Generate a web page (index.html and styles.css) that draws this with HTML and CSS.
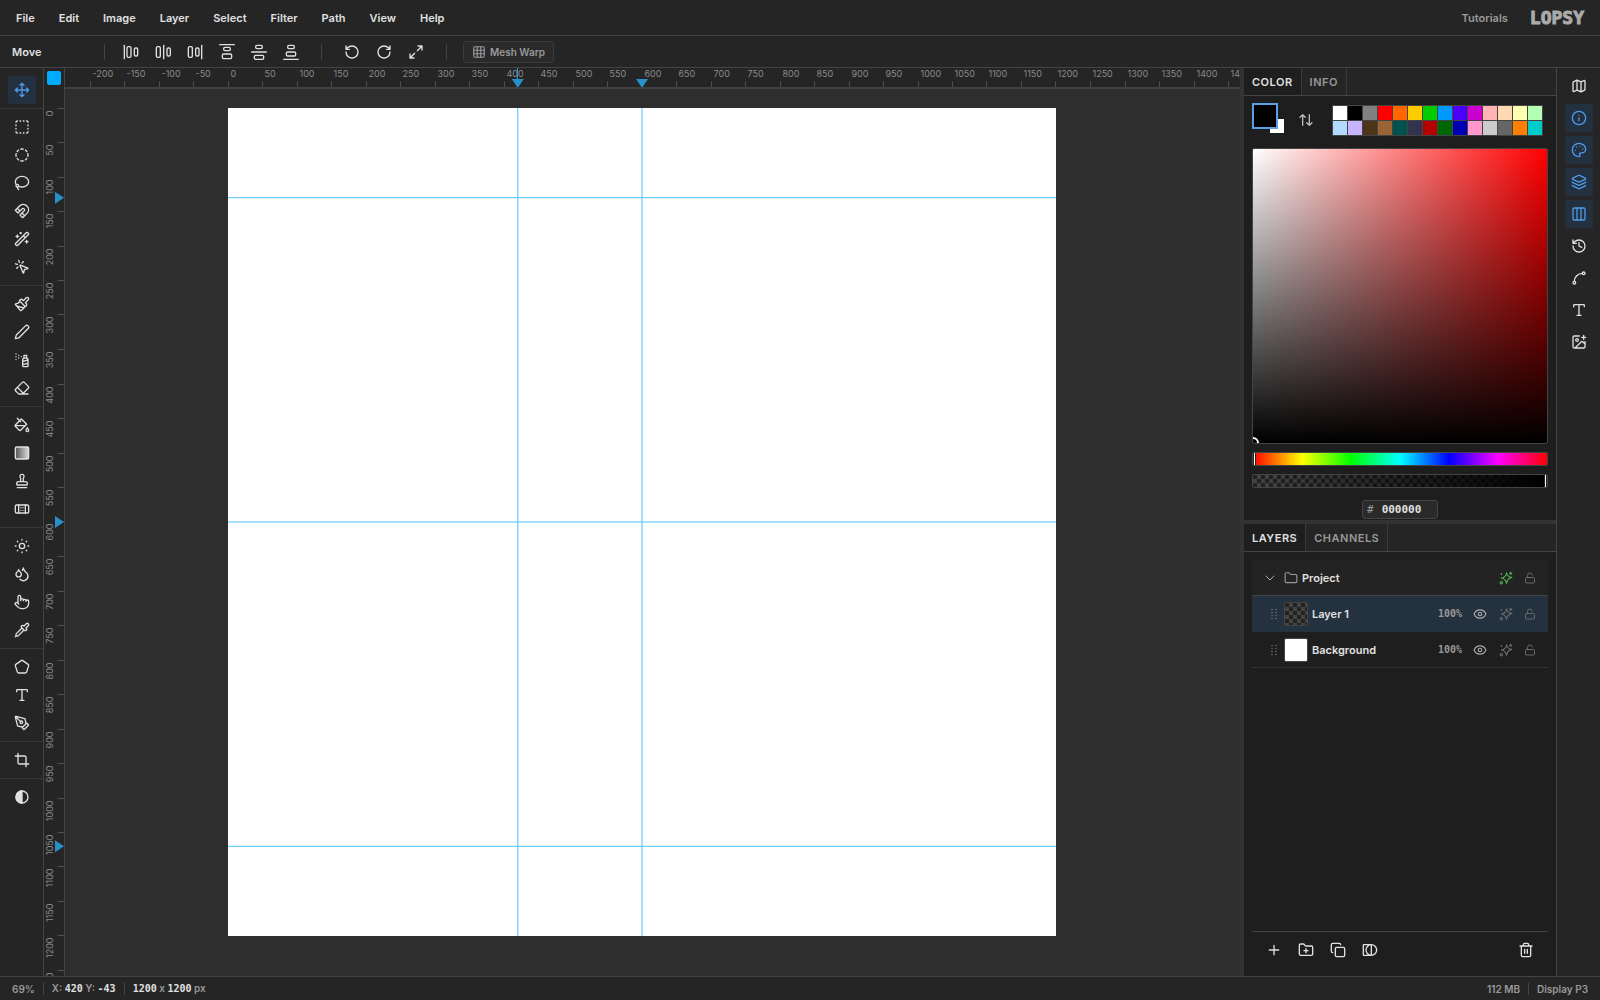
FILE: index.html
```html
<!DOCTYPE html>
<html lang="en">

<head>
  <meta charset="UTF-8">
  <meta name="viewport" content="width=device-width, initial-scale=1.0">
  <title>Lopsy</title>
  <link rel="stylesheet" href="styles.css">
</head>

<body>
  <!-- icon sprite -->
  <svg class="sprite" aria-hidden="true">
    <defs>
      <linearGradient id="grad-fill"><stop offset="0" stop-color="#555"/><stop offset="1" stop-color="#ddd"/></linearGradient>
    </defs>
    <symbol id="i-move" viewBox="0 0 24 24"><path d="M12 2v20M15 19l-3 3-3-3M19 9l3 3-3 3M2 12h20M5 9l-3 3 3 3M9 5l3-3 3 3"/></symbol>
    <symbol id="i-marquee" viewBox="0 0 24 24"><path d="M5 3a2 2 0 0 0-2 2M19 3a2 2 0 0 1 2 2M21 19a2 2 0 0 1-2 2M5 21a2 2 0 0 1-2-2M9 3h1M9 21h1M14 3h1M14 21h1M3 9v1M21 9v1M3 14v1M21 14v1"/></symbol>
    <symbol id="i-ellipse" viewBox="0 0 24 24"><path d="M10.1 3.18a9 9 0 0 1 3.8 0M13.9 20.82a9 9 0 0 1-3.8 0M17.2 4.7a9 9 0 0 1 2.1 2.1M3.18 13.9a9 9 0 0 1 0-3.8M19.3 17.2a9 9 0 0 1-2.1 2.1M20.82 10.1a9 9 0 0 1 0 3.8M4.7 6.8a9 9 0 0 1 2.1-2.1M6.8 19.3a9 9 0 0 1-2.1-2.1"/></symbol>
    <symbol id="i-lasso" viewBox="0 0 24 24"><path d="M7 22a5 5 0 0 1-2-4M3.3 14A6.8 6.8 0 0 1 2 10c0-4.4 4.5-8 10-8s10 3.6 10 8-4.5 8-10 8a12 12 0 0 1-5-1"/><circle cx="5" cy="16" r="2"/></symbol>
    <symbol id="i-magnet" viewBox="0 0 24 24"><path d="m6 15-4-4 6.75-6.77a7.79 7.79 0 0 1 11 11L13 22l-4-4 6.39-6.36a2.14 2.14 0 0 0-3-3L6 15M5 8l4 4M12 15l4 4"/></symbol>
    <symbol id="i-wand" viewBox="0 0 24 24"><path d="m21.64 3.64-1.28-1.28a1.21 1.21 0 0 0-1.72 0L2.36 18.64a1.21 1.21 0 0 0 0 1.72l1.28 1.28a1.2 1.2 0 0 0 1.72 0L21.64 5.36a1.2 1.2 0 0 0 0-1.72M14 7l3 3M5 6v4M19 14v4M10 2v2M7 8H3M21 16h-4M11 3H9"/></symbol>
    <symbol id="i-click" viewBox="0 0 24 24"><path d="M14 4.1 12 6M5.1 8l-2.9-.8M6 12l-1.9 2M7.2 2.2 8 5.1M9.04 9.69a.5.5 0 0 1 .65-.65l11 4.5a.5.5 0 0 1-.07.95l-4.35 1.04a1 1 0 0 0-.74.74l-1.04 4.35a.5.5 0 0 1-.95.07z"/></symbol>
    <symbol id="i-brush" viewBox="0 0 24 24"><path d="m14.62 17.9-10.68-2.92M18.38 2.62a1 1 0 1 1 3 3L17.36 9.64a.5.5 0 0 0 0 .71l.94.94a2.41 2.41 0 0 1 0 3.41l-.94.94a.5.5 0 0 1-.71 0L8.35 7.35a.5.5 0 0 1 0-.71l.95-.94a2.41 2.41 0 0 1 3.4 0l.95.94a.5.5 0 0 0 .7 0zM9 8c-1.8 2.71-3.97 3.46-6.58 3.95a.51.51 0 0 0-.3.82l7.32 8.88a1 1 0 0 0 1.18.2C12.74 20.4 16 16.8 16 15"/></symbol>
    <symbol id="i-pencil" viewBox="0 0 24 24"><path d="M21.17 6.81a1 1 0 0 0-3.98-3.98L3.84 16.17a2 2 0 0 0-.5.83l-1.32 4.36a.5.5 0 0 0 .62.62l4.36-1.32a2 2 0 0 0 .83-.5z"/></symbol>
    <symbol id="i-spray" viewBox="0 0 24 24"><path d="M3 3h.01M7 5h.01M11 7h.01M3 7h.01M7 9h.01M3 11h.01M15 5h4v4h-4zM19 9l2 2v10c0 .6-.4 1-1 1h-6c-.6 0-1-.4-1-1V11l2-2M13 14l8-2M13 19l8-2"/></symbol>
    <symbol id="i-eraser" viewBox="0 0 24 24"><path d="M21 21H8a2 2 0 0 1-1.42-.59l-4-4a2 2 0 0 1 0-2.82l10-10a2 2 0 0 1 2.83 0l6 6a2 2 0 0 1 0 2.82L12.83 21M5.08 11.09l8.83 8.83"/></symbol>
    <symbol id="i-bucket" viewBox="0 0 24 24"><path d="m19 11-8-8-8.6 8.6a2 2 0 0 0 0 2.8l5.2 5.2c.8.8 2 .8 2.8 0L19 11ZM5 2l5 5M2 13h15M22 20a2 2 0 1 1-4 0c0-1.6 1.7-2.4 2-4 .3 1.6 2 2.4 2 4Z"/></symbol>
    <symbol id="i-gradient" viewBox="0 0 24 24"><rect x="2" y="3" width="20" height="18" rx="2" fill="url(#grad-fill)"/></symbol>
    <symbol id="i-stamp" viewBox="0 0 24 24"><path d="M5 22h14M19.27 13.73A2.5 2.5 0 0 0 17.5 13h-11A2.5 2.5 0 0 0 4 15.5V17a1 1 0 0 0 1 1h14a1 1 0 0 0 1-1v-1.5c0-.66-.26-1.3-.73-1.77ZM14 13V8.5C14 7 15 7 15 5a3 3 0 0 0-3-3c-1.66 0-3 1-3 3s1 2 1 3.5V13"/></symbol>
    <symbol id="i-heal" viewBox="0 0 24 24"><rect x="2" y="6" width="20" height="12" rx="2"/><path d="M7 6v12M17 6v12M10.5 10h.01M13.5 10h.01M10.5 14h.01M13.5 14h.01"/></symbol>
    <symbol id="i-sun" viewBox="0 0 24 24"><circle cx="12" cy="12" r="4"/><path d="M12 2v1M12 21v1M4.93 4.93l.7.7M18.37 18.37l.7.7M2 12h1M21 12h1M5.63 18.37l-.7.7M19.07 4.93l-.7.7"/></symbol>
    <symbol id="i-drops" viewBox="0 0 24 24"><path d="M7 16.3c2.2 0 4-1.83 4-4.05 0-1.16-.57-2.26-1.71-3.19S7.29 6.75 7 5.3c-.29 1.45-1.14 2.84-2.29 3.76S3 11.1 3 12.25c0 2.22 1.8 4.05 4 4.05zM12.56 6.6A10.97 10.97 0 0 0 14 3.02c.5 2.5 2 4.9 4 6.5s3 3.5 3 5.5a6.98 6.98 0 0 1-11.91 4.97"/></symbol>
    <symbol id="i-finger" viewBox="0 0 24 24"><path d="M18 11v-1a2 2 0 0 0-4 0M14 10V9a2 2 0 0 0-4 0v1M10 9.5V4a2 2 0 0 0-4 0v10M18 11a2 2 0 1 1 4 0v3a8 8 0 0 1-8 8h-2c-2.8 0-4.5-.86-6-2.34l-3.6-3.6a2 2 0 0 1 2.84-2.82L7 15"/></symbol>
    <symbol id="i-pipette" viewBox="0 0 24 24"><path d="m12 9-8.4 8.4a2 2 0 0 0-.6 1.43v1.34a2 2 0 0 1-.59 1.42A2 2 0 0 1 3.83 21h1.34a2 2 0 0 0 1.42-.59L15 12M18 9l.4.4a1 1 0 1 1-3 3l-3.8-3.8a1 1 0 1 1 3-3l.4.4 3.4-3.4a1 1 0 1 1 3 3zM2 22l.41-.41"/></symbol>
    <symbol id="i-pentagon" viewBox="0 0 24 24"><path d="M10.83 2.38a2 2 0 0 1 2.34 0l8 5.74a2 2 0 0 1 .73 2.25l-3.04 9.26a2 2 0 0 1-1.9 1.37H7.04a2 2 0 0 1-1.9-1.37L2.1 10.37a2 2 0 0 1 .73-2.25z"/></symbol>
    <symbol id="i-type" viewBox="0 0 24 24"><path d="M12 4v16M4 7V5a1 1 0 0 1 1-1h14a1 1 0 0 1 1 1v2M9 20h6"/></symbol>
    <symbol id="i-pen" viewBox="0 0 24 24"><path d="M15.7 21.3a1 1 0 0 1-1.4 0l-1.6-1.6a1 1 0 0 1 0-1.4l5.6-5.6a1 1 0 0 1 1.4 0l1.6 1.6a1 1 0 0 1 0 1.4zM18 13l-1.38-6.87a1 1 0 0 0-.74-.78L3.24 2.03a1 1 0 0 0-1.21 1.2l3.32 12.65a1 1 0 0 0 .78.75L13 18M2.3 2.3l7.29 7.29"/><circle cx="11" cy="11" r="2"/></symbol>
    <symbol id="i-crop" viewBox="0 0 24 24"><path d="M6 2v14a2 2 0 0 0 2 2h14M18 22V8a2 2 0 0 0-2-2H2"/></symbol>
    <symbol id="i-contrast" viewBox="0 0 24 24"><circle cx="12" cy="12" r="9"/><path d="M12 3a9 9 0 0 0 0 18z" fill="currentColor"/></symbol>
    <symbol id="i-align-left" viewBox="0 0 24 24"><path d="M2 2v20"/><rect x="6" y="4" width="6" height="16" rx="2"/><rect x="17" y="6" width="5" height="12" rx="2"/></symbol>
    <symbol id="i-align-center" viewBox="0 0 24 24"><path d="M13 2v20"/><rect x="2" y="4" width="6" height="16" rx="2"/><rect x="18" y="6" width="5" height="12" rx="2"/></symbol>
    <symbol id="i-align-right" viewBox="0 0 24 24"><path d="M22 2v20"/><rect x="2" y="4" width="6" height="16" rx="2"/><rect x="13" y="6" width="5" height="12" rx="2"/></symbol>
    <symbol id="i-align-top" viewBox="0 0 24 24"><path d="M1 1h22"/><rect x="7" y="5" width="10" height="5" rx="2"/><rect x="5" y="15" width="14" height="7" rx="2"/></symbol>
    <symbol id="i-align-middle" viewBox="0 0 24 24"><path d="M1 12h22"/><rect x="7" y="2" width="10" height="5" rx="2"/><rect x="5" y="17" width="14" height="6" rx="2"/></symbol>
    <symbol id="i-align-bottom" viewBox="0 0 24 24"><path d="M1 23h22"/><rect x="7" y="2" width="10" height="5" rx="2"/><rect x="5" y="12" width="14" height="6" rx="2"/></symbol>
    <symbol id="i-rotate-ccw" viewBox="0 0 24 24"><path d="M3 12a9 9 0 1 0 9-9 9.75 9.75 0 0 0-6.74 2.74L3 8M3 3v5h5"/></symbol>
    <symbol id="i-rotate-cw" viewBox="0 0 24 24"><path d="M21 12a9 9 0 1 1-9-9c2.52 0 4.93 1 6.74 2.74L21 8M21 3v5h-5"/></symbol>
    <symbol id="i-expand" viewBox="0 0 24 24"><path d="M15 3h6v6M21 3l-7 7M3 21l7-7M9 21H3v-6"/></symbol>
    <symbol id="i-grid" viewBox="0 0 24 24"><rect x="3" y="3" width="18" height="18" rx="2"/><path d="M3 9h18M3 15h18M9 3v18M15 3v18"/></symbol>
    <symbol id="i-map" viewBox="0 0 24 24"><path d="M14.1 5.55a2 2 0 0 0 1.8 0l3.65-1.83A1 1 0 0 1 21 4.62v12.76a1 1 0 0 1-.55.9l-4.56 2.27a2 2 0 0 1-1.78 0L9.9 18.45a2 2 0 0 0-1.8 0l-3.65 1.83A1 1 0 0 1 3 19.38V6.62a1 1 0 0 1 .55-.9L8.1 3.45a2 2 0 0 1 1.8 0zM15 5.76v15M9 3.24v15"/></symbol>
    <symbol id="i-info" viewBox="0 0 24 24"><circle cx="12" cy="12" r="10"/><path d="M12 16v-4M12 8h.01"/></symbol>
    <symbol id="i-palette" viewBox="0 0 24 24"><path d="M13.5 6.5h.01M17.5 10.5h.01M8.5 7.5h.01M6.5 12.5h.01M12 2C6.5 2 2 6.5 2 12s4.5 10 10 10c.93 0 1.65-.75 1.65-1.69 0-.44-.18-.83-.44-1.12-.29-.3-.44-.66-.44-1.13a1.64 1.64 0 0 1 1.67-1.67h2c3.05 0 5.55-2.5 5.55-5.55C21.97 6.01 17.46 2 12 2z"/></symbol>
    <symbol id="i-layers" viewBox="0 0 24 24"><path d="M12.83 2.18a2 2 0 0 0-1.66 0L2.6 6.08a1 1 0 0 0 0 1.83l8.58 3.91a2 2 0 0 0 1.66 0l8.58-3.9a1 1 0 0 0 0-1.83zM2 12a1 1 0 0 0 .58.91l8.6 3.91a2 2 0 0 0 1.65 0l8.58-3.9A1 1 0 0 0 22 12M2 17a1 1 0 0 0 .58.91l8.6 3.91a2 2 0 0 0 1.65 0l8.58-3.9A1 1 0 0 0 22 17"/></symbol>
    <symbol id="i-columns" viewBox="0 0 24 24"><rect x="3" y="3" width="18" height="18" rx="2"/><path d="M9 3v18M15 3v18"/></symbol>
    <symbol id="i-history" viewBox="0 0 24 24"><path d="M3 12a9 9 0 1 0 9-9 9.75 9.75 0 0 0-6.74 2.74L3 8M3 3v5h5M12 7v5l4 2"/></symbol>
    <symbol id="i-spline" viewBox="0 0 24 24"><circle cx="19" cy="5" r="2"/><circle cx="5" cy="19" r="2"/><path d="M5 17A12 12 0 0 1 17 5"/></symbol>
    <symbol id="i-image-plus" viewBox="0 0 24 24"><path d="M16 5h6M19 2v6M21 11.5V19a2 2 0 0 1-2 2H5a2 2 0 0 1-2-2V5a2 2 0 0 1 2-2h7.5M21 15l-3.09-3.09a2 2 0 0 0-2.82 0L6 21"/><circle cx="9" cy="9" r="2"/></symbol>
    <symbol id="i-swap" viewBox="0 0 24 24"><path d="m21 16-4 4-4-4M17 20V4M3 8l4-4 4 4M7 4v16"/></symbol>
    <symbol id="i-chevron" viewBox="0 0 24 24"><path d="m4 8 8 8 8-8"/></symbol>
    <symbol id="i-folder" viewBox="0 0 24 24"><path d="M20 20a2 2 0 0 0 2-2V8a2 2 0 0 0-2-2h-7.9a2 2 0 0 1-1.69-.9L9.6 3.9A2 2 0 0 0 7.93 3H4a2 2 0 0 0-2 2v13a2 2 0 0 0 2 2Z"/></symbol>
    <symbol id="i-folder-plus" viewBox="0 0 24 24"><path d="M12 10v6M9 13h6M20 20a2 2 0 0 0 2-2V8a2 2 0 0 0-2-2h-7.9a2 2 0 0 1-1.69-.9L9.6 3.9A2 2 0 0 0 7.93 3H4a2 2 0 0 0-2 2v13a2 2 0 0 0 2 2Z"/></symbol>
    <symbol id="i-effects" viewBox="0 0 24 24"><path d="M13 3q1 7 9 8-8 2-9 10-2-8-9-9 8-1 9-9zM20 2v4M22 4h-4M4 4v2"/><circle cx="4" cy="20" r="2"/></symbol>
    <symbol id="i-unlock" viewBox="0 0 24 24"><rect x="3" y="11" width="18" height="11" rx="2"/><path d="M7 11V7a5 5 0 0 1 9.9-1"/></symbol>
    <symbol id="i-eye" viewBox="0 0 24 24"><path d="M2.06 12.35a1 1 0 0 1 0-.7 10.75 10.75 0 0 1 19.88 0 1 1 0 0 1 0 .7 10.75 10.75 0 0 1-19.88 0"/><circle cx="12" cy="12" r="3"/></symbol>
    <symbol id="i-grip" viewBox="0 0 24 24"><path d="M8 3h.01M8 9h.01M8 15h.01M8 21h.01M16 3h.01M16 9h.01M16 15h.01M16 21h.01"/></symbol>
    <symbol id="i-plus" viewBox="0 0 24 24"><path d="M5 12h14M12 5v14"/></symbol>
    <symbol id="i-copy" viewBox="0 0 24 24"><rect x="8" y="8" width="14" height="14" rx="2"/><path d="M4 16c-1.1 0-2-.9-2-2V4c0-1.1.9-2 2-2h10c1.1 0 2 .9 2 2"/></symbol>
    <symbol id="i-mask" viewBox="0 0 24 24"><path d="M14 4H3a1 1 0 0 0-1 1v14a1 1 0 0 0 1 1h11V4a8 8 0 0 1 0 16 8 8 0 0 1 0-16"/></symbol>
    <symbol id="i-trash" viewBox="0 0 24 24"><path d="M3 6h18M19 6v14c0 1-1 2-2 2H7c-1 0-2-1-2-2V6M8 6V4c0-1 1-2 2-2h4c1 0 2 1 2 2v2M10 11v6M14 11v6"/></symbol>
  </svg>

  <div class="app">
    <header class="menubar">
      <nav class="menus">
        <button>File</button>
        <button>Edit</button>
        <button>Image</button>
        <button>Layer</button>
        <button>Select</button>
        <button>Filter</button>
        <button>Path</button>
        <button>View</button>
        <button>Help</button>
      </nav>
      <a class="tutorials" href="#">Tutorials</a>
      <a class="logo" href="#">LOPSY</a>
    </header>

    <div class="options">
      <span class="tool-name">Move</span>
      <div class="option-group first">
        <button class="icon-btn" aria-label="Align left"><svg><use href="#i-align-left"/></svg></button>
        <button class="icon-btn" aria-label="Align center"><svg><use href="#i-align-center"/></svg></button>
        <button class="icon-btn" aria-label="Align right"><svg><use href="#i-align-right"/></svg></button>
        <button class="icon-btn" aria-label="Align top"><svg><use href="#i-align-top"/></svg></button>
        <button class="icon-btn" aria-label="Align middle"><svg><use href="#i-align-middle"/></svg></button>
        <button class="icon-btn" aria-label="Align bottom"><svg><use href="#i-align-bottom"/></svg></button>
      </div>
      <span class="divider"></span>
      <div class="option-group">
        <button class="icon-btn" aria-label="Rotate left"><svg><use href="#i-rotate-ccw"/></svg></button>
        <button class="icon-btn" aria-label="Rotate right"><svg><use href="#i-rotate-cw"/></svg></button>
        <button class="icon-btn" aria-label="Scale"><svg><use href="#i-expand"/></svg></button>
      </div>
      <span class="divider"></span>
      <button class="mesh-btn"><svg><use href="#i-grid"/></svg>Mesh Warp</button>
    </div>

    <div class="workspace">
      <aside class="toolbox">
        <div class="tool-group">
          <button class="icon-btn active" aria-label="Move"><svg><use href="#i-move"/></svg></button>
        </div>
        <div class="tool-group">
          <button class="icon-btn" aria-label="Rectangle select"><svg><use href="#i-marquee"/></svg></button>
          <button class="icon-btn" aria-label="Ellipse select"><svg><use href="#i-ellipse"/></svg></button>
          <button class="icon-btn" aria-label="Lasso"><svg><use href="#i-lasso"/></svg></button>
          <button class="icon-btn" aria-label="Magnetic lasso"><svg><use href="#i-magnet"/></svg></button>
          <button class="icon-btn" aria-label="Magic wand"><svg><use href="#i-wand"/></svg></button>
          <button class="icon-btn" aria-label="Quick select"><svg><use href="#i-click"/></svg></button>
        </div>
        <div class="tool-group">
          <button class="icon-btn" aria-label="Brush"><svg><use href="#i-brush"/></svg></button>
          <button class="icon-btn" aria-label="Pencil"><svg><use href="#i-pencil"/></svg></button>
          <button class="icon-btn" aria-label="Spray"><svg><use href="#i-spray"/></svg></button>
          <button class="icon-btn" aria-label="Eraser"><svg><use href="#i-eraser"/></svg></button>
        </div>
        <div class="tool-group">
          <button class="icon-btn" aria-label="Fill"><svg><use href="#i-bucket"/></svg></button>
          <button class="icon-btn" aria-label="Gradient"><svg><use href="#i-gradient"/></svg></button>
          <button class="icon-btn" aria-label="Clone stamp"><svg><use href="#i-stamp"/></svg></button>
          <button class="icon-btn" aria-label="Heal"><svg><use href="#i-heal"/></svg></button>
        </div>
        <div class="tool-group">
          <button class="icon-btn" aria-label="Dodge"><svg><use href="#i-sun"/></svg></button>
          <button class="icon-btn" aria-label="Blur"><svg><use href="#i-drops"/></svg></button>
          <button class="icon-btn" aria-label="Smudge"><svg><use href="#i-finger"/></svg></button>
          <button class="icon-btn" aria-label="Eyedropper"><svg><use href="#i-pipette"/></svg></button>
        </div>
        <div class="tool-group">
          <button class="icon-btn" aria-label="Shape"><svg><use href="#i-pentagon"/></svg></button>
          <button class="icon-btn" aria-label="Text"><svg><use href="#i-type"/></svg></button>
          <button class="icon-btn" aria-label="Pen"><svg><use href="#i-pen"/></svg></button>
        </div>
        <div class="tool-group">
          <button class="icon-btn" aria-label="Crop"><svg><use href="#i-crop"/></svg></button>
        </div>
        <div class="tool-group">
          <button class="icon-btn" aria-label="Quick mask"><svg><use href="#i-contrast"/></svg></button>
        </div>
      </aside>

      <main class="stage" id="stage">
        <div class="artboard" id="artboard">
          <svg class="guides" id="guides"></svg>
        </div>
        <svg class="ruler ruler-x" id="ruler-x"></svg>
        <svg class="ruler ruler-y" id="ruler-y"></svg>
        <div class="ruler-corner"><button class="guide-color" aria-label="Guide color"></button></div>
      </main>

      <section class="panels">
        <div class="panel color-panel">
          <div class="tabs">
            <button class="tab selected">COLOR</button>
            <button class="tab">INFO</button>
          </div>
          <div class="color-body">
            <div class="swatch-row">
              <div class="fgbg">
                <button class="bg" aria-label="Background color"></button>
                <button class="fg" aria-label="Foreground color"></button>
              </div>
              <button class="icon-btn swap" aria-label="Swap colors"><svg><use href="#i-swap"/></svg></button>
              <div class="palette" id="palette"></div>
            </div>
            <div class="sv-area"><span class="sv-cursor"></span></div>
            <input class="slider hue" type="range" min="0" max="360" value="0" aria-label="Hue">
            <input class="slider alpha" type="range" min="0" max="100" value="100" aria-label="Opacity">
            <label class="hex">#<input type="text" value="000000"></label>
          </div>
        </div>

        <div class="panel layers-panel">
          <div class="tabs">
            <button class="tab selected">LAYERS</button>
            <button class="tab">CHANNELS</button>
          </div>
          <div class="layers-body">
            <div class="layer group">
              <button class="chevron" aria-label="Collapse"><svg><use href="#i-chevron"/></svg></button>
              <svg class="folder"><use href="#i-folder"/></svg>
              <span class="layer-name">Project</span>
              <button class="layer-btn effects on" aria-label="Effects"><svg><use href="#i-effects"/></svg></button>
              <button class="layer-btn" aria-label="Lock"><svg><use href="#i-unlock"/></svg></button>
            </div>
            <div class="layer current">
              <svg class="grip"><use href="#i-grip"/></svg>
              <span class="thumb checker"></span>
              <span class="layer-name">Layer 1</span>
              <span class="opacity">100%</span>
              <button class="layer-btn visible" aria-label="Visibility"><svg><use href="#i-eye"/></svg></button>
              <button class="layer-btn effects" aria-label="Effects"><svg><use href="#i-effects"/></svg></button>
              <button class="layer-btn" aria-label="Lock"><svg><use href="#i-unlock"/></svg></button>
            </div>
            <div class="layer">
              <svg class="grip"><use href="#i-grip"/></svg>
              <span class="thumb"></span>
              <span class="layer-name">Background</span>
              <span class="opacity">100%</span>
              <button class="layer-btn visible" aria-label="Visibility"><svg><use href="#i-eye"/></svg></button>
              <button class="layer-btn effects" aria-label="Effects"><svg><use href="#i-effects"/></svg></button>
              <button class="layer-btn" aria-label="Lock"><svg><use href="#i-unlock"/></svg></button>
            </div>
          </div>
          <div class="layers-actions">
            <button class="icon-btn" aria-label="Add layer"><svg><use href="#i-plus"/></svg></button>
            <button class="icon-btn" aria-label="Add group"><svg><use href="#i-folder-plus"/></svg></button>
            <button class="icon-btn" aria-label="Duplicate"><svg><use href="#i-copy"/></svg></button>
            <button class="icon-btn" aria-label="Add mask"><svg><use href="#i-mask"/></svg></button>
            <button class="icon-btn delete" aria-label="Delete"><svg><use href="#i-trash"/></svg></button>
          </div>
        </div>
      </section>

      <aside class="rail">
        <button class="icon-btn" aria-label="Navigator"><svg><use href="#i-map"/></svg></button>
        <button class="icon-btn active" aria-label="Info"><svg><use href="#i-info"/></svg></button>
        <button class="icon-btn active" aria-label="Color"><svg><use href="#i-palette"/></svg></button>
        <button class="icon-btn active" aria-label="Layers"><svg><use href="#i-layers"/></svg></button>
        <button class="icon-btn active" aria-label="Channels"><svg><use href="#i-columns"/></svg></button>
        <button class="icon-btn" aria-label="History"><svg><use href="#i-history"/></svg></button>
        <button class="icon-btn" aria-label="Paths"><svg><use href="#i-spline"/></svg></button>
        <button class="icon-btn" aria-label="Text"><svg><use href="#i-type"/></svg></button>
        <button class="icon-btn" aria-label="Assets"><svg><use href="#i-image-plus"/></svg></button>
      </aside>
    </div>

    <footer class="statusbar">
      <span>69%</span>
      <span class="status-item">X: <b>420</b> Y: <b>-43</b></span>
      <span class="status-item"><b>1200</b> x <b>1200</b> px</span>
      <span class="status-right">112 MB</span>
      <span class="status-item">Display P3</span>
    </footer>
  </div>

  <script src="script.js"></script>
</body>

</html>
```

FILE: styles.css
```css
* {
  box-sizing: border-box;
}

body {
  margin: 0;
  overflow: hidden;
  background: #252525;
  color: #e0e0e0;
  font-family: Inter, "Liberation Sans", sans-serif;
  font-size: 11px;
  line-height: 16px;
}

button {
  margin: 0;
  padding: 0;
  border: 0;
  background: none;
  color: inherit;
  font: inherit;
}

a {
  color: inherit;
  text-decoration: none;
}

svg {
  display: block;
  width: 16px;
  height: 16px;
  fill: none;
  stroke: currentColor;
  stroke-width: 2;
  stroke-linecap: round;
  stroke-linejoin: round;
}

.sprite {
  position: absolute;
  width: 0;
  height: 0;
}

.app {
  display: flex;
  flex-direction: column;
  height: 100vh;
}

.icon-btn {
  display: flex;
  align-items: center;
  justify-content: center;
  flex: none;
  width: 28px;
  height: 28px;
  border-radius: 2px;
}

.icon-btn.active {
  background: #22303f;
  color: #4f9ae8;
}

/* menu bar */
.menubar {
  display: flex;
  align-items: center;
  height: 36px;
  padding: 0 16px 0 4px;
  border-bottom: 1px solid #444;
}

.menus {
  display: flex;
  flex: 1;
}

.menus button {
  padding: 4px 12px;
  font-weight: 600;
}

.tutorials {
  margin-right: 22px;
  color: #999;
  font-weight: 600;
}

.logo {
  color: #aaa;
  font-family: "DejaVu Sans Mono", monospace;
  font-size: 18px;
  font-weight: bold;
  -webkit-text-stroke: 1px #aaa;
}

/* tool options */
.options {
  display: flex;
  align-items: center;
  height: 32px;
  padding: 0 12px;
  border-bottom: 1px solid #444;
}

.tool-name {
  width: 93px;
  border-right: 1px solid #444;
  font-weight: 600;
}

.option-group {
  display: flex;
  gap: 4px;
}

.option-group.first {
  margin-left: 12px;
}

.divider {
  width: 1px;
  height: 16px;
  margin: 0 16px;
  background: #444;
}

.mesh-btn {
  display: flex;
  align-items: center;
  gap: 4px;
  height: 22px;
  padding: 0 8px;
  border: 1px solid #3c3c3c;
  border-radius: 3px;
  background: #2a2a2a;
  color: #999;
  font-size: 10px;
  font-weight: 600;
}

.mesh-btn svg {
  width: 14px;
  height: 14px;
}

/* workspace */
.workspace {
  display: flex;
  flex: 1;
  min-height: 0;
}

.toolbox {
  width: 44px;
  padding-top: 4px;
  border-right: 1px solid #444;
}

.tool-group {
  padding: 4px 0 4px 8px;
  border-bottom: 1px solid #383838;
}

.tool-group:last-child {
  border-bottom: 0;
}

.stage {
  position: relative;
  display: flex;
  align-items: center;
  justify-content: center;
  flex: 1;
  min-width: 0;
  overflow: hidden;
  background: #2e2e2e;
}

.artboard {
  flex: none;
  background: #fff;
}

.guides {
  width: 100%;
  height: 100%;
  stroke: #00aaff;
  stroke-width: 1;
  stroke-linecap: butt;
  opacity: 0.7;
}

.ruler {
  position: absolute;
  top: 0;
  left: 0;
  background: #252525;
  stroke: none;
}

.ruler-x {
  width: 100%;
  height: 21px;
  border-bottom: 2px solid #404040;
}

.ruler-y {
  width: 21px;
  height: 100%;
  border-right: 1px solid #444;
}

.ruler text {
  fill: #8a8a8a;
  font-size: 9px;
}

.ruler .tick {
  stroke: #505050;
  stroke-width: 1;
}

.ruler .marker {
  fill: #2790c8;
}

.ruler .cursor {
  stroke: #2ba3e0;
  stroke-width: 1;
}

.ruler-corner {
  position: absolute;
  top: 0;
  left: 0;
  width: 20px;
  height: 20px;
  padding: 3px;
  background: #252525;
}

.guide-color {
  display: block;
  width: 14px;
  height: 14px;
  border-radius: 2px;
  background: #00aaff;
}

/* panels */
.panels {
  display: flex;
  flex-direction: column;
  width: 317px;
  border-left: 4px solid #333;
  border-right: 1px solid #444;
  background: #1e1e1e;
}

.tabs {
  display: flex;
  height: 28px;
  border-bottom: 1px solid #444;
  background: #252525;
}

.tab {
  padding: 0 8px;
  border-right: 1px solid #3a3a3a;
  color: #999;
  font-weight: 600;
  letter-spacing: 0.5px;
}

.tab.selected {
  background: #1e1e1e;
  color: #e0e0e0;
}

.color-panel {
  border-bottom: 4px solid #333;
}

.color-body {
  display: flex;
  flex-direction: column;
  gap: 8px;
  padding: 7px 8px 1px;
}

.swatch-row {
  display: flex;
  align-items: flex-end;
  height: 33px;
  margin-bottom: 4px;
}

.fgbg {
  position: relative;
  align-self: flex-start;
  width: 32px;
  height: 30px;
}

.fgbg .fg {
  position: absolute;
  top: 0;
  left: 0;
  width: 26px;
  height: 26px;
  border: 2px solid #5aa0e6;
  background: #000;
}

.fgbg .bg {
  position: absolute;
  right: 0;
  bottom: 0;
  width: 14px;
  height: 14px;
  background: #fff;
}

.swap {
  align-self: center;
  margin-left: 8px;
  color: #bbb;
}

.palette {
  display: grid;
  grid-template-columns: repeat(14, 14px);
  grid-auto-rows: 14px;
  gap: 1px;
  margin: 0 5px 0 auto;
  padding: 1px;
  background: #444;
}

.sv-area {
  position: relative;
  aspect-ratio: 1;
  overflow: hidden;
  border: 1px solid #444;
  border-radius: 2px;
  background: linear-gradient(to top, #000, transparent), linear-gradient(to right, #fff, #f00);
}

.sv-cursor {
  position: absolute;
  left: -6px;
  bottom: -6px;
  width: 12px;
  height: 12px;
  border: 2px solid #fff;
  border-radius: 50%;
}

.slider {
  appearance: none;
  width: 100%;
  height: 14px;
  margin: 0;
  border: 1px solid #444;
  border-radius: 2px;
}

.slider.hue {
  background: linear-gradient(to right, #f00, #ff0, #0f0, #0ff, #00f, #f0f, #f00);
}

.slider.alpha {
  background: linear-gradient(to right, transparent, #000), repeating-conic-gradient(#444 0 25%, #222 0 50%) 0 0 / 8px 8px;
}

.slider::-webkit-slider-thumb {
  appearance: none;
  width: 3px;
  height: 12px;
  border: 1px solid #222;
  border-width: 0 1px;
  background: #fff;
}

.hex {
  display: flex;
  align-items: center;
  align-self: center;
  width: 76px;
  height: 19px;
  margin-top: 4px;
  padding-left: 4px;
  border: 1px solid #444;
  border-radius: 3px;
  background: #2a2a2a;
  color: #999;
  font-family: "DejaVu Sans Mono", monospace;
}

.hex input {
  width: 52px;
  margin-left: 8px;
  padding: 0;
  border: 0;
  background: none;
  color: #e0e0e0;
  font: inherit;
  font-weight: bold;
}

.layers-panel {
  display: flex;
  flex-direction: column;
  flex: 1;
}

.layers-body {
  flex: 1;
  padding: 8px 8px 0;
}

.layer {
  display: flex;
  align-items: center;
  height: 36px;
  padding: 0 6px 0 16px;
  border-bottom: 1px solid #333;
  font-weight: 600;
}

.layer.group {
  padding-left: 12px;
  border-color: #444;
  background: #232323;
}

.layer.current {
  border-color: #24313e;
  background: #24313e;
}

.layer svg {
  width: 12px;
  height: 12px;
}

.chevron {
  margin-right: 8px;
  color: #aaa;
}

.layer .folder {
  width: 14px;
  height: 14px;
  margin-right: 4px;
  color: #999;
}

.layer .grip {
  margin-right: 4px;
  color: #777;
  stroke-width: 3;
}

.thumb {
  width: 24px;
  height: 24px;
  margin-right: 4px;
  border: 1px solid #444;
  border-radius: 2px;
  background: #fff;
}

.thumb.checker {
  background: repeating-conic-gradient(#444 0 25%, #222 0 50%) 0 0 / 8px 8px;
}

.layer-name {
  flex: 1;
}

.opacity {
  margin-right: 6px;
  color: #999;
  font-family: "DejaVu Sans Mono", monospace;
  font-size: 10px;
  font-weight: bold;
}

.layer-btn {
  display: flex;
  justify-content: center;
  width: 24px;
  color: #6a6a6a;
}

.layer-btn.on {
  color: #4caf50;
}

.layer-btn.visible {
  margin-right: 2px;
  color: #aaa;
}

.layer .visible svg,
.layer .effects svg {
  width: 14px;
  height: 14px;
}

.layers-actions {
  display: flex;
  gap: 4px;
  margin: 0 8px 8px;
  padding: 4px 8px;
  border-top: 1px solid #444;
}

.layers-actions .delete {
  margin-left: auto;
}

.rail {
  display: flex;
  flex-direction: column;
  align-items: center;
  gap: 4px;
  width: 43px;
  padding-top: 4px;
}

/* status bar */
.statusbar {
  display: flex;
  align-items: center;
  height: 24px;
  padding: 0 12px;
  border-top: 1px solid #444;
  color: #999;
  font-size: 10px;
  font-weight: 600;
}

.status-item {
  margin-left: 8px;
  padding-left: 8px;
  border-left: 1px solid #444;
  line-height: 12px;
}

.statusbar b {
  color: #e0e0e0;
  font-family: "DejaVu Sans Mono", monospace;
}

.status-right {
  margin-left: auto;
}
```

FILE: script.js
```js
const SVG_NS = 'http://www.w3.org/2000/svg';
const doc = { width: 1200, height: 1200, zoom: 0.69 };
const guides = { x: [420, 600], y: [130, 600, 1070] };
const cursorX = 420;
const step = 50;

const stage = document.getElementById('stage');
const artboard = document.getElementById('artboard');
const guideLayer = document.getElementById('guides');
const rulerX = document.getElementById('ruler-x');
const rulerY = document.getElementById('ruler-y');

const palette = [
  '#ffffff', '#000000', '#808080', '#ff0000', '#ff6600', '#ffcc00', '#00cc00',
  '#0099ff', '#4b00ff', '#cc00cc', '#ffb3b3', '#ffd9b3', '#ffffb3', '#b3ffb3',
  '#b3d9ff', '#c8b3ff', '#4d3319', '#996633', '#00524d', '#33334d', '#b30000',
  '#006600', '#0000b3', '#ff99cc', '#cccccc', '#666666', '#ff8000', '#00cccc'
];

palette.forEach(color => {
  const swatch = document.createElement('button');
  swatch.style.background = color;
  swatch.setAttribute('aria-label', color);
  document.getElementById('palette').appendChild(swatch);
});

function add(parent, tag, attrs, text) {
  const el = document.createElementNS(SVG_NS, tag);
  Object.keys(attrs).forEach(key => el.setAttribute(key, attrs[key]));
  if (text !== undefined) el.textContent = text;
  parent.appendChild(el);
}

function drawGuides() {
  const w = doc.width * doc.zoom;
  const h = doc.height * doc.zoom;
  guides.x.forEach(v => add(guideLayer, 'path', { d: `M${v * doc.zoom} 0v${h}` }));
  guides.y.forEach(v => add(guideLayer, 'path', { d: `M0 ${v * doc.zoom}h${w}` }));
}

function drawRulers() {
  const ox = artboard.offsetLeft;
  const oy = artboard.offsetTop;
  rulerX.innerHTML = '';
  rulerY.innerHTML = '';

  const startX = Math.ceil((20 - ox) / doc.zoom / step) * step;
  for (let v = startX; ox + v * doc.zoom < stage.clientWidth; v += step) {
    const x = Math.floor(ox + v * doc.zoom) + 0.5;
    add(rulerX, 'path', { class: 'tick', d: `M${x} 14v6` });
    add(rulerX, 'text', { x: x + 2, y: 9 }, v);
  }

  const startY = Math.ceil((20 - oy) / doc.zoom / step) * step;
  for (let v = startY; oy + v * doc.zoom < stage.clientHeight; v += step) {
    const y = Math.floor(oy + v * doc.zoom) + 0.5;
    add(rulerY, 'path', { class: 'tick', d: `M14 ${y}h6` });
    add(rulerY, 'text', { transform: `translate(9 ${y + 2}) rotate(-90)`, 'text-anchor': 'end' }, v);
  }

  const cx = Math.floor(ox + cursorX * doc.zoom) + 0.5;
  add(rulerX, 'path', { class: 'cursor', d: `M${cx} 0v20` });

  guides.x.forEach(v => {
    const x = ox + v * doc.zoom;
    add(rulerX, 'path', { class: 'marker', d: `M${x - 6} 11h12l-6 9z` });
  });
  guides.y.forEach(v => {
    const y = oy + v * doc.zoom;
    add(rulerY, 'path', { class: 'marker', d: `M11 ${y - 6}v12l9-6z` });
  });
}

artboard.style.width = doc.width * doc.zoom + 'px';
artboard.style.height = doc.height * doc.zoom + 'px';
drawGuides();

window.addEventListener('resize', drawRulers);
drawRulers();
```
